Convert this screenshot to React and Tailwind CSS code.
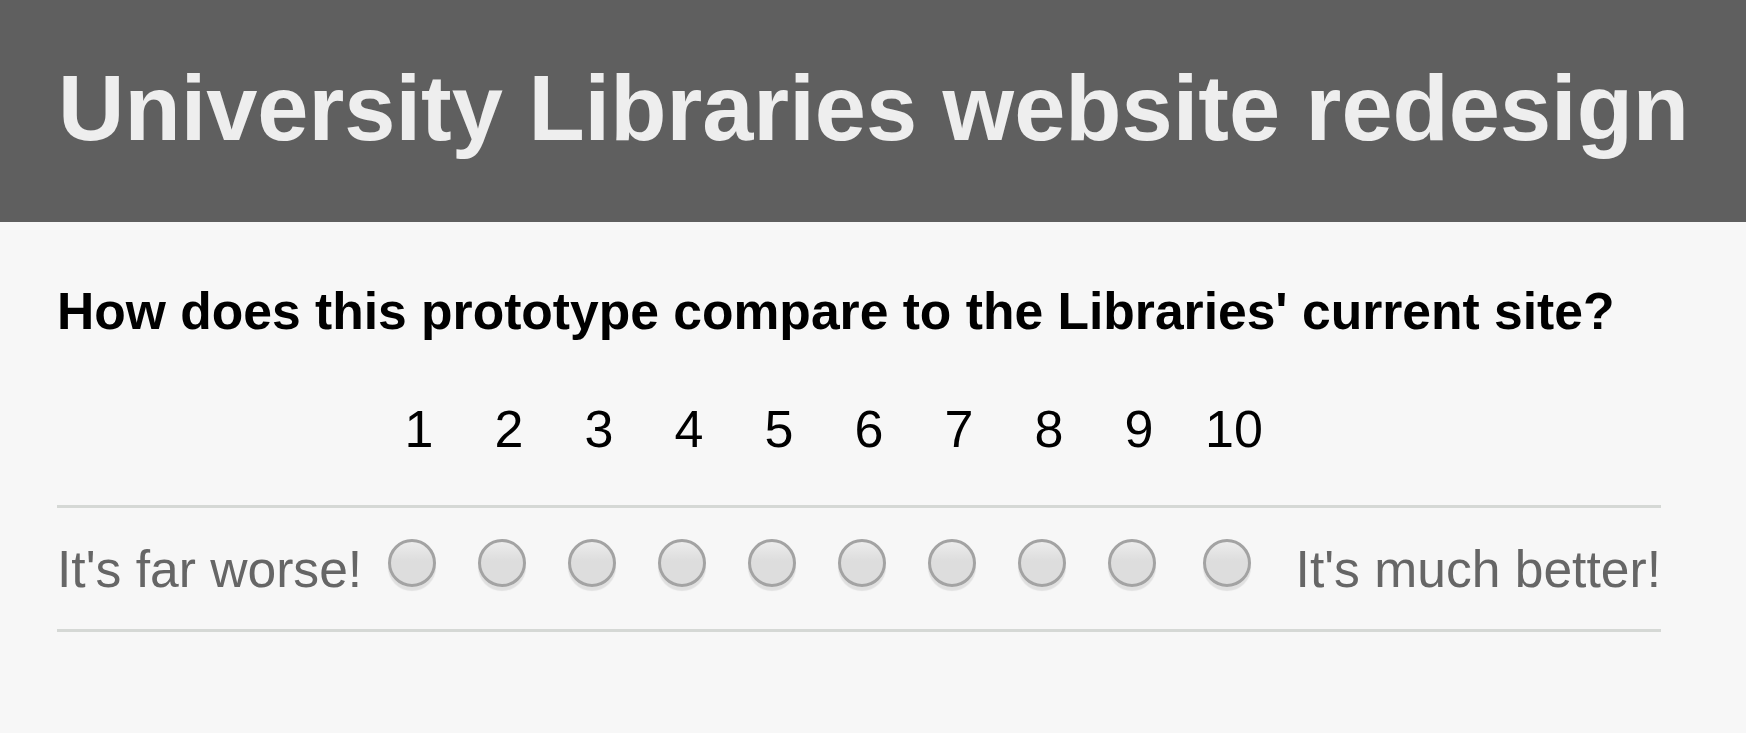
export default function App() {
  const scale = [1, 2, 3, 4, 5, 6, 7, 8, 9, 10];

  return (
    <div className="min-h-[733px] bg-[#f7f7f7] font-['Liberation_Sans',Arial,sans-serif]">
      <header className="h-[222px] bg-[#5f5f5f] px-[58px] pt-[62px]">
        <h1 className="text-[92px] leading-[92px] font-bold text-[#eeeeee] whitespace-nowrap">
          University Libraries website redesign
        </h1>
      </header>

      <main className="px-[57px] pt-[59px]">
        <h2 className="text-[51.6px] leading-[60px] font-bold text-black whitespace-nowrap">
          How does this prototype compare to the Libraries' current site?
        </h2>

        <div className="w-[1604px] mt-[58px]">
          {/* number header */}
          <div className="grid grid-cols-[310px_repeat(9,90px)_100px_1fr] h-[106px]">
            <div />
            {scale.map((n) => (
              <div key={n} className="pl-[14px] text-center text-[52px] leading-[60px] text-black">
                {n}
              </div>
            ))}
            <div />
          </div>

          {/* radio row */}
          <div className="grid grid-cols-[310px_repeat(9,90px)_100px_1fr] items-start border-y-[3px] border-[#d5d8d5] pt-[31px] pb-[30px]">
            <label className="text-[51.6px] leading-[60px] text-[#666666] whitespace-nowrap">
              It's far worse!
            </label>
            {scale.map((n) => (
              <div key={n} className="flex justify-center">
                <span className="block w-[48px] h-[48px] rounded-full border-[3px] border-[#a3a3a3] bg-[linear-gradient(#ececec,#dddddd_45%,#dddddd)] shadow-[0_4px_1px_rgba(0,0,0,0.09)]" />
              </div>
            ))}
            <label className="text-right text-[51.6px] leading-[60px] text-[#666666] whitespace-nowrap">
              It's much better!
            </label>
          </div>
        </div>
      </main>
    </div>
  );
}
